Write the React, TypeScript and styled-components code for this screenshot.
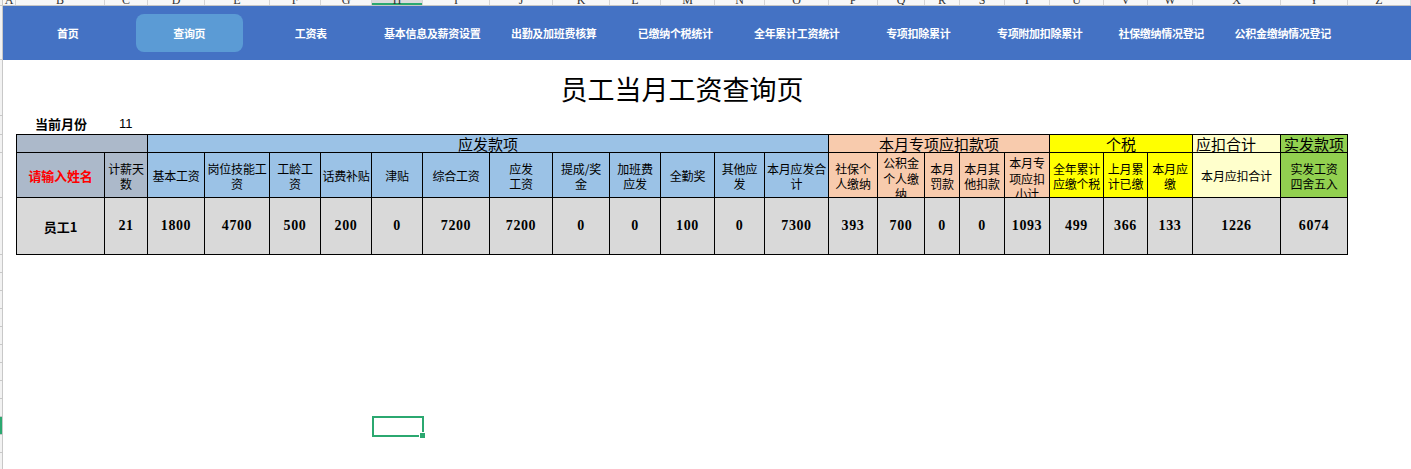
import React from 'react';
import styled, { createGlobalStyle } from 'styled-components';

const GlobalStyle = createGlobalStyle`
  html, body {
    margin: 0;
    padding: 0;
    background: #ffffff;
  }
  body {
    font-family: "Noto Sans CJK SC", "Liberation Sans", sans-serif;
    overflow: hidden;
  }
`;

const CJK = `"Noto Sans CJK SC", "Liberation Sans", sans-serif`;

type Col = {
  letter: string;
  width: number;
  label: string[];
  value: string;
  bg: string;
};

const BLUEGRAY = '#acb9ca';
const BLUE = '#9bc2e6';
const PEACH = '#f8cbad';
const YELLOW = '#ffff00';
const CREAM = '#ffffcc';
const GREEN = '#92d050';

const COLUMNS: Col[] = [
  { letter: 'B', width: 88, label: ['请输入姓名'], value: '员工1', bg: BLUEGRAY },
  { letter: 'C', width: 43, label: ['计薪天', '数'], value: '21', bg: BLUEGRAY },
  { letter: 'D', width: 57, label: ['基本工资'], value: '1800', bg: BLUE },
  { letter: 'E', width: 65, label: ['岗位技能工', '资'], value: '4700', bg: BLUE },
  { letter: 'F', width: 51, label: ['工龄工', '资'], value: '500', bg: BLUE },
  { letter: 'G', width: 51, label: ['话费补贴'], value: '200', bg: BLUE },
  { letter: 'H', width: 51, label: ['津贴'], value: '0', bg: BLUE },
  { letter: 'I', width: 67, label: ['综合工资'], value: '7200', bg: BLUE },
  { letter: 'J', width: 63, label: ['应发', '工资'], value: '7200', bg: BLUE },
  { letter: 'K', width: 57, label: ['提成/奖', '金'], value: '0', bg: BLUE },
  { letter: 'L', width: 51, label: ['加班费', '应发'], value: '0', bg: BLUE },
  { letter: 'M', width: 54, label: ['全勤奖'], value: '100', bg: BLUE },
  { letter: 'N', width: 50, label: ['其他应', '发'], value: '0', bg: BLUE },
  { letter: 'O', width: 64, label: ['本月应发合', '计'], value: '7300', bg: BLUE },
  { letter: 'P', width: 49, label: ['社保个', '人缴纳'], value: '393', bg: PEACH },
  { letter: 'Q', width: 47, label: ['公积金', '个人缴', '纳'], value: '700', bg: PEACH },
  { letter: 'R', width: 35, label: ['本月', '罚款'], value: '0', bg: PEACH },
  { letter: 'S', width: 45, label: ['本月其', '他扣款'], value: '0', bg: PEACH },
  { letter: 'T', width: 45, label: ['本月专', '项应扣', '小计'], value: '1093', bg: PEACH },
  { letter: 'U', width: 54, label: ['全年累计', '应缴个税'], value: '499', bg: YELLOW },
  { letter: 'V', width: 44, label: ['上月累', '计已缴'], value: '366', bg: YELLOW },
  { letter: 'W', width: 45, label: ['本月应', '缴'], value: '133', bg: YELLOW },
  { letter: 'X', width: 88, label: ['本月应扣合计'], value: '1226', bg: CREAM },
  { letter: 'Y', width: 67, label: ['实发工资', '四舍五入'], value: '6074', bg: GREEN },
];

const GROUPS = [
  { label: '', span: 2, bg: BLUEGRAY, align: 'center' },
  { label: '应发款项', span: 12, bg: BLUE, align: 'center' },
  { label: '本月专项应扣款项', span: 5, bg: PEACH, align: 'center' },
  { label: '个税', span: 3, bg: YELLOW, align: 'center' },
  { label: '应扣合计', span: 1, bg: CREAM, align: 'left' },
  { label: '实发款项', span: 1, bg: GREEN, align: 'center' },
];

const NAV = [
  '首页',
  '查询页',
  '工资表',
  '基本信息及薪资设置',
  '出勤及加班费核算',
  '已缴纳个税统计',
  '全年累计工资统计',
  '专项扣除累计',
  '专项附加扣除累计',
  '社保缴纳情况登记',
  '公积金缴纳情况登记',
];

const ROW_HEIGHTS = [54, 56, 19, 18, 45, 57, 18, 18, 18, 18, 18, 18, 18, 18, 18, 18, 18, 18];
const SELECTED_ROW = 15;
const SELECTED_COL = 'H';

const Sheet = styled.div`
  display: grid;
  grid-template-columns: 3px 1fr;
  grid-template-rows: 6px 1fr;
  width: 100vw;
  height: 100vh;
`;

const Corner = styled.div`
  background: #f2f2f2;
  border-right: 1px solid #c8c8c8;
  border-bottom: 1px solid #c8c8c8;
  box-sizing: border-box;
`;

const ColHeader = styled.div`
  display: flex;
  height: 6px;
  overflow: hidden;
  background: #f7f7f7;
  border-bottom: 1px solid #c6c6c6;
  box-sizing: border-box;
`;

const ColLetter = styled.div<{ $w: number; $active?: boolean }>`
  flex: 0 0 ${(p) => p.$w}px;
  ${(p) => (p.$w === 0 ? 'flex: 1 1 auto;' : '')}
  display: flex;
  align-items: flex-end;
  justify-content: center;
  height: 5px;
  overflow: hidden;
  border-right: 1px solid #d4d4d4;
  box-sizing: border-box;
  font-family: "Liberation Serif", serif;
  font-size: 12px;
  color: #333;
  background: ${(p) => (p.$active ? '#dcdcdc' : 'transparent')};
  box-shadow: ${(p) => (p.$active ? 'inset 0 -2px 0 #2ba870' : 'none')};

  span {
    line-height: 12px;
    margin-bottom: -1px;
  }
`;

const RowHeader = styled.div`
  display: flex;
  flex-direction: column;
  background: #f2f2f2;
  border-right: 1px solid #c8c8c8;
  box-sizing: border-box;
  overflow: hidden;
`;

const RowMark = styled.div<{ $h: number; $active?: boolean }>`
  flex: 0 0 ${(p) => p.$h}px;
  border-bottom: 1px solid #c8c8c8;
  box-sizing: border-box;
  background: ${(p) => (p.$active ? '#2ba870' : 'transparent')};
`;

const Body = styled.div`
  position: relative;
  display: flex;
  flex-direction: column;
  overflow: hidden;
`;

const NavBar = styled.nav`
  display: flex;
  align-items: center;
  height: 54px;
  padding-left: 4px;
  background: #4472c4;
`;

const NavItem = styled.div<{ $active?: boolean }>`
  flex: 0 0 121.5px;
  display: flex;
  align-items: center;
  justify-content: center;
  height: 38px;
  border-radius: 8px;
  box-sizing: border-box;
  color: #ffffff;
  font-family: ${CJK};
  font-size: 11px;
  font-weight: 700;
  letter-spacing: -0.3px;
  white-space: nowrap;
  background: ${(p) => (p.$active ? '#5b9bd5' : 'transparent')};
  ${(p) => (p.$active ? 'margin: 0 7px; flex-basis: 107.5px;' : '')}
`;

const Title = styled.h1`
  width: 1332px;
  margin: 13px 0 0 13px;
  font-family: ${CJK};
  font-size: 27px;
  font-weight: 400;
  line-height: 32px;
  text-align: center;
  color: #000;
`;

const MonthRow = styled.div`
  display: flex;
  align-items: center;
  height: 18px;
  margin: 9px 0 0 32px;
  font-family: ${CJK};
  font-size: 13px;
  color: #000;
`;

const MonthLabel = styled.span`
  width: 84px;
  font-weight: 700;
`;

const MonthValue = styled.span`
  font-family: "Liberation Sans", sans-serif;
  font-size: 13px;
`;

const Table = styled.div`
  display: grid;
  grid-template-columns: ${COLUMNS.map((c) => `${c.width}px`).join(' ')};
  grid-template-rows: 18px 45px 57px;
  margin: 2px 0 0 13px;
  width: max-content;
  border-top: 1px solid #000;
  border-left: 1px solid #000;
`;

const Cell = styled.div<{ $bg: string }>`
  display: flex;
  align-items: center;
  justify-content: center;
  overflow: hidden;
  box-sizing: border-box;
  border-right: 1px solid #000;
  border-bottom: 1px solid #000;
  background: ${(p) => p.$bg};
  color: #000;
`;

const GroupCell = styled(Cell)<{ $span: number; $align: string }>`
  grid-column: span ${(p) => p.$span};
  justify-content: ${(p) => (p.$align === 'left' ? 'flex-start' : 'center')};
  padding-left: ${(p) => (p.$align === 'left' ? '3px' : '0')};
  font-family: ${CJK};
  font-size: 15px;
  line-height: 17px;
  white-space: nowrap;
`;

const HeadCell = styled(Cell)<{ $red?: boolean; $lines: number }>`
  flex-direction: column;
  justify-content: ${(p) => (p.$lines > 2 ? 'flex-start' : 'center')};
  padding-top: ${(p) => (p.$red ? '2px' : p.$lines > 2 ? '2px' : '3px')};
  font-family: ${CJK};
  font-size: ${(p) => (p.$red ? '13px' : '12px')};
  font-weight: ${(p) => (p.$red ? 700 : 400)};
  line-height: ${(p) => (p.$lines > 2 ? '15.5px' : '14.5px')};
  color: ${(p) => (p.$red ? '#ff0000' : '#000')};
  text-align: center;
  white-space: nowrap;
  letter-spacing: -0.2px;
`;

const DataCell = styled(Cell)<{ $cjk?: boolean }>`
  font-family: ${(p) => (p.$cjk ? CJK : `"Liberation Serif", serif`)};
  font-size: ${(p) => (p.$cjk ? '13px' : '14px')};
  font-weight: 700;
  letter-spacing: ${(p) => (p.$cjk ? '0' : '0.6px')};
`;

const Selection = styled.div`
  position: absolute;
  left: 369px;
  top: 410px;
  width: 52px;
  height: 21px;
  border: 2px solid #2ba870;
  box-sizing: border-box;

  &::after {
    content: '';
    position: absolute;
    right: -4px;
    bottom: -4px;
    width: 5px;
    height: 5px;
    background: #2ba870;
    border: 1px solid #fff;
  }
`;

const LETTERS: { letter: string; width: number }[] = [
  { letter: 'A', width: 13 },
  ...COLUMNS.map((c, i) => ({ letter: c.letter, width: i === 0 ? c.width + 1 : c.width })),
  { letter: 'Z', width: 0 },
];

export default function App() {
  return (
    <>
      <GlobalStyle />
      <Sheet>
        <Corner />
        <ColHeader>
          {LETTERS.map((l) => (
            <ColLetter key={l.letter} $w={l.width} $active={l.letter === SELECTED_COL}>
              <span>{l.letter}</span>
            </ColLetter>
          ))}
        </ColHeader>
        <RowHeader>
          {ROW_HEIGHTS.map((h, i) => (
            <RowMark key={i} $h={h} $active={i === SELECTED_ROW} />
          ))}
        </RowHeader>
        <Body>
          <NavBar>
            {NAV.map((n) => (
              <NavItem key={n} $active={n === '查询页'}>
                {n}
              </NavItem>
            ))}
          </NavBar>
          <Title>员工当月工资查询页</Title>
          <MonthRow>
            <MonthLabel>当前月份</MonthLabel>
            <MonthValue>11</MonthValue>
          </MonthRow>
          <Table>
            {GROUPS.map((g, i) => (
              <GroupCell key={i} $bg={g.bg} $span={g.span} $align={g.align}>
                {g.label}
              </GroupCell>
            ))}
            {COLUMNS.map((c, i) => (
              <HeadCell key={c.letter} $bg={c.bg} $red={i === 0} $lines={c.label.length}>
                {c.label.map((line, j) => (
                  <span key={j}>{line}</span>
                ))}
              </HeadCell>
            ))}
            {COLUMNS.map((c, i) => (
              <DataCell key={c.letter} $bg="#d9d9d9" $cjk={i === 0}>
                {c.value}
              </DataCell>
            ))}
          </Table>
          <Selection />
        </Body>
      </Sheet>
    </>
  );
}
